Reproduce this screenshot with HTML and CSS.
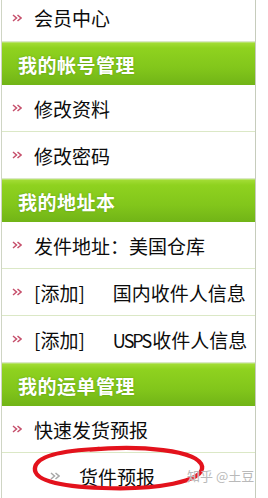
FILE: index.html
```html
<!DOCTYPE html>
<html lang="zh">
<head>
<meta charset="utf-8">
<title>会员中心</title>
<link rel="stylesheet" href="styles.css">
</head>
<body>
<div class="panel">
  <div class="row first"><svg class="arr" viewBox="0 0 10 8"><path d="M1 1 L4.5 4 L1 7 M5.5 1 L9 4 L5.5 7"/></svg><span>会员中心</span></div>
  <div class="head">我的帐号管理</div>
  <div class="row"><svg class="arr" viewBox="0 0 10 8"><path d="M1 1 L4.5 4 L1 7 M5.5 1 L9 4 L5.5 7"/></svg><span>修改资料</span></div>
  <div class="row"><svg class="arr" viewBox="0 0 10 8"><path d="M1 1 L4.5 4 L1 7 M5.5 1 L9 4 L5.5 7"/></svg><span>修改密码</span></div>
  <div class="head">我的地址本</div>
  <div class="row"><svg class="arr" viewBox="0 0 10 8"><path d="M1 1 L4.5 4 L1 7 M5.5 1 L9 4 L5.5 7"/></svg><span>发件地址：美国仓库</span></div>
  <div class="row"><svg class="arr" viewBox="0 0 10 8"><path d="M1 1 L4.5 4 L1 7 M5.5 1 L9 4 L5.5 7"/></svg><span class="add">[添加]</span><span>国内收件人信息</span></div>
  <div class="row"><svg class="arr" viewBox="0 0 10 8"><path d="M1 1 L4.5 4 L1 7 M5.5 1 L9 4 L5.5 7"/></svg><span class="add">[添加]</span><span><span class="latin">USPS</span>收件人信息</span></div>
  <div class="head">我的运单管理</div>
  <div class="row"><svg class="arr" viewBox="0 0 10 8"><path d="M1 1 L4.5 4 L1 7 M5.5 1 L9 4 L5.5 7"/></svg><span>快速发货预报</span></div>
  <div class="row sub"><svg class="arr gray" viewBox="0 0 10 8"><path d="M1 1 L4.5 4 L1 7 M5.5 1 L9 4 L5.5 7"/></svg><span>货件预报</span>
    <svg class="circle" viewBox="0 0 180 50" preserveAspectRatio="none"><path d="M60 5 C110 0 172 5 175 23 C177 40 125 47 82 46 C35 45 3 39 4 25 C5 12 30 6 70 4"/></svg>
    <span class="mark">知乎 @土豆</span>
  </div>
</div>
</body>
</html>
```

FILE: styles.css
```css
html, body {
  margin: 0;
  padding: 0;
  background: #fff;
  overflow: hidden;
}
body {
  font-family: "Noto Sans CJK SC", "Noto Sans", sans-serif;
  color: #0c0c0c;
}
.panel {
  margin-left: 1px;
  width: 255px;
  box-sizing: border-box;
  border-left: 1px solid #cfd5c4;
  border-right: 1px solid #c6ccbc;
  height: 498px;
  overflow: hidden;
}
.row {
  height: 47px;
  box-sizing: border-box;
  border-bottom: 1px solid #dbe8c6;
  display: flex;
  align-items: center;
  font-size: 19px;
  line-height: 1;
  position: relative;
  white-space: nowrap;
}
.row.first {
  height: 42px;
  padding-bottom: 6px;
}
.arr {
  width: 10px;
  height: 8px;
  margin-left: 10px;
  margin-right: 12px;
  flex: none;
  fill: none;
  stroke: #c6506c;
  stroke-width: 1.5;
}
.arr.gray {
  stroke: #a8a8a8;
  margin-left: 48px;
  margin-right: 19px;
}
.add {
  margin-right: 28px;
}
.latin {
  font-size: 18px;
  letter-spacing: -2px;
  margin-right: 2px;
}
.head {
  height: 43px;
  box-sizing: border-box;
  background: linear-gradient(to bottom, #a2dc34 0, #8fd21f 12%, #82c61b 60%, #71b417 100%);
  border-top: 1px solid #b6e36a;
  color: #fff;
  font-weight: bold;
  font-size: 19px;
  line-height: 1;
  display: flex;
  align-items: center;
  padding-left: 16px;
  text-shadow: 0 0 2px #5d9a12;
  letter-spacing: 0.5px;
}
.circle {
  position: absolute;
  left: 29px;
  top: -8px;
  width: 176px;
  height: 47px;
  fill: none;
  stroke: #e3121c;
  stroke-width: 4.5;
  overflow: visible;
}
.mark {
  position: absolute;
  left: 185px;
  top: 16px;
  font-size: 13px;
  color: #b9b9b9;
  text-shadow: 0 0 1px #fff;
}
```
